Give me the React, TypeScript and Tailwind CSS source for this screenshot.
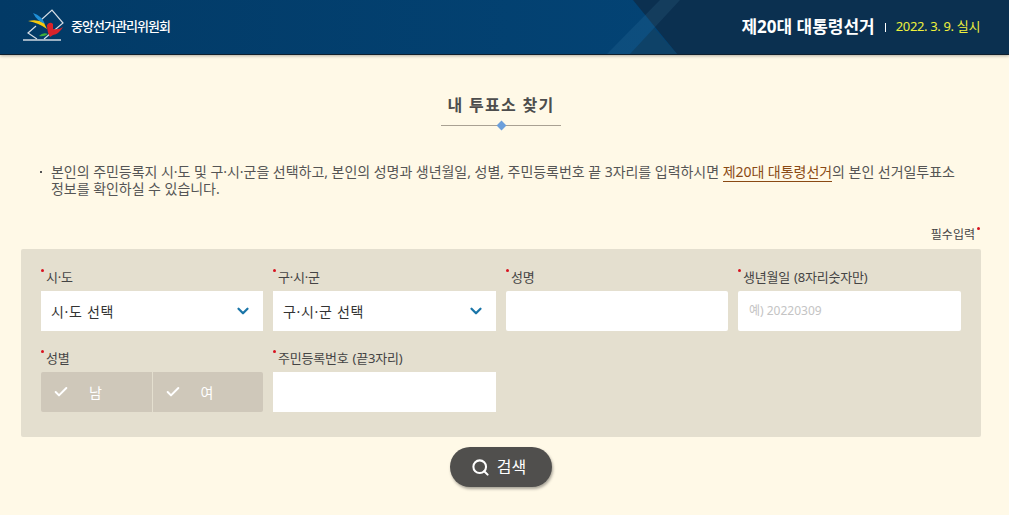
import { ChevronDown, Check, Search } from 'lucide-react';

const fontStack = "font-['Noto_Sans','Noto_Sans_CJK_KR',sans-serif]";

function FieldLabel({ text, note }: { text: string; note?: string }) {
  return (
    <div className="relative h-[22px] pl-[5px] text-[13px] leading-[16px] tracking-[-0.2px] text-[#444444]">
      <span className="absolute left-0 top-0 h-[3px] w-[3px] rounded-full bg-[#d8121f]" />
      {text}
      {note && <span className="ml-1">{note}</span>}
    </div>
  );
}

function SelectBox({ label }: { label: string }) {
  return (
    <div className="flex h-10 items-center justify-between bg-white pl-[10px] pr-[11px] text-[14px] tracking-[0.7px] text-[#333333]">
      <span>{label}</span>
      <ChevronDown className="h-[18px] w-[18px] text-[#1a75a8]" strokeWidth={3} />
    </div>
  );
}

function GenderButton({ label }: { label: string }) {
  return (
    <div className="flex h-10 flex-1 items-center bg-[#cfc8ba] pl-[12px] text-[14px] text-white first:rounded-l-[2px] last:rounded-r-[2px]">
      <Check className="h-[16px] w-[16px]" strokeWidth={3} />
      <span className="ml-[20px]">{label}</span>
    </div>
  );
}

function Logo() {
  return (
    <svg width="48" height="36" viewBox="0 0 48 36" className="shrink-0">
      <path d="M18 11 L29 1 L40 14 L21 30 M13 17 L5 24 L14 30" fill="none" stroke="#d5dde5" strokeWidth="1.2" />
      <path d="M0 31 H38" stroke="#cfd8e0" strokeWidth="1.5" />
      <path d="M5 12 Q15 10 21 14 L24 20 Q16 14 5 12 Z" fill="#f6c90e" />
      <path d="M10 4 Q19 7 22 15 Q14 12 10 4 Z" fill="#1f8fd6" />
      <path d="M24 16 Q27 12 30 15 L30 20 Q36 21 40 18 Q36 25 30 26 L27 28 Q24 23 24 16 Z" fill="#d8232a" />
      <path d="M16 27 Q20 23 25 25 Q21 28 16 27 Z" fill="#3fae3a" />
    </svg>
  );
}

export default function App() {
  return (
    <div className={`${fontStack} h-[515px] w-[1009px] overflow-hidden bg-[#fff9e7]`}>
      <header className="relative flex h-[55px] items-center justify-between overflow-hidden border-b border-[#10202e] bg-linear-to-r from-[#023a66] to-[#04487c] shadow-[0_1px_3px_rgba(0,0,0,0.3)]">
        <svg className="absolute inset-0" width="1009" height="54" viewBox="0 0 1009 54">
          <polygon points="633,0 1009,0 1009,54 677,54" fill="#0b3050" />
          <polygon points="630,54 654,28 677,54" fill="#0e4268" />
          <polygon points="607,54 660,0 680,0 630,54" fill="#6fb0dc" fillOpacity="0.1" />
        </svg>
        <div className="relative ml-[23px] flex items-center">
          <Logo />
          <span className="text-[13px] font-medium tracking-[-0.95px] text-white">중앙선거관리위원회</span>
        </div>
        <div className="relative mr-[29px] flex items-center">
          <span className="text-[17px] font-bold tracking-[0px] text-white">제20대 대통령선거</span>
          <span className="mx-[10px] h-[9px] w-px bg-white" />
          <span className="text-[13px] tracking-[-0.35px] text-[#eef03c]">2022. 3. 9. 실시</span>
        </div>
      </header>

      <div className="mx-[21px] w-[960px]">
        <div className="flex flex-col items-center pt-[36px]">
          <h1 className="text-[16px] font-bold leading-[28px] tracking-[1.3px] text-[#4d4d4d]">내 투표소 찾기</h1>
          <div className="relative mt-[6px] h-px w-[120px] bg-[#a9a193]">
            <span className="absolute left-[57px] top-[-3px] h-[7px] w-[7px] rotate-45 bg-[#6c9fdb]" />
          </div>
        </div>

        <div className="relative ml-[30px] mr-[20px] mt-[37px] text-[14px] leading-[17px] tracking-[-0.035px] text-[#555555]">
          <span className="absolute left-[-11px] top-[8px] h-[2px] w-[2px] bg-[#555555]" />
          <div className="whitespace-nowrap">
            본인의 주민등록지 시·도 및 구·시·군을 선택하고, 본인의 성명과 생년월일, 성별, 주민등록번호 끝 3자리를 입력하시면{' '}
            <span className="border-b border-[#8a4a14] text-[#8a4a14]">제20대 대통령선거</span>의 본인 선거일투표소
          </div>
          <div>정보를 확인하실 수 있습니다.</div>
        </div>

        <div className="relative mr-[6px] mt-[29px] h-[18px] text-right text-[12px] leading-[18px] text-[#444444]">
          필수입력
          <span className="absolute right-[-5px] top-[1px] h-[3px] w-[3px] rounded-full bg-[#d8121f]" />
        </div>

        <div className="mt-[5px] h-[188px] rounded-[2px] bg-[#e4dfcf] px-5 pt-5">
          <div className="grid grid-cols-[222px_223px_222px_223px] gap-x-[10px] gap-y-[19px]">
            <div>
              <FieldLabel text="시·도" />
              <SelectBox label="시·도 선택" />
            </div>
            <div>
              <FieldLabel text="구·시·군" />
              <SelectBox label="구·시·군 선택" />
            </div>
            <div>
              <FieldLabel text="성명" />
              <div className="h-10 rounded-[2px] bg-white" />
            </div>
            <div>
              <FieldLabel text="생년월일" note="(8자리숫자만)" />
              <div className="flex h-10 items-center rounded-[2px] bg-white pl-[11px] text-[12px] text-[#c4c4c4]">
                예) 20220309
              </div>
            </div>
            <div>
              <FieldLabel text="성별" />
              <div className="flex gap-px">
                <GenderButton label="남" />
                <GenderButton label="여" />
              </div>
            </div>
            <div>
              <FieldLabel text="주민등록번호" note="(끝3자리)" />
              <div className="h-10 bg-white" />
            </div>
          </div>
        </div>

        <div className="mt-[10px] flex justify-center">
          <button className="flex h-10 w-[102px] items-center justify-center rounded-[20px] bg-[#504f4d] pr-[5px] text-[16px] text-white shadow-[1px_2px_3px_rgba(0,0,0,0.35)]">
            <Search className="mr-[7px] h-[19px] w-[19px]" strokeWidth={2.6} />
            검색
          </button>
        </div>
      </div>
    </div>
  );
}
